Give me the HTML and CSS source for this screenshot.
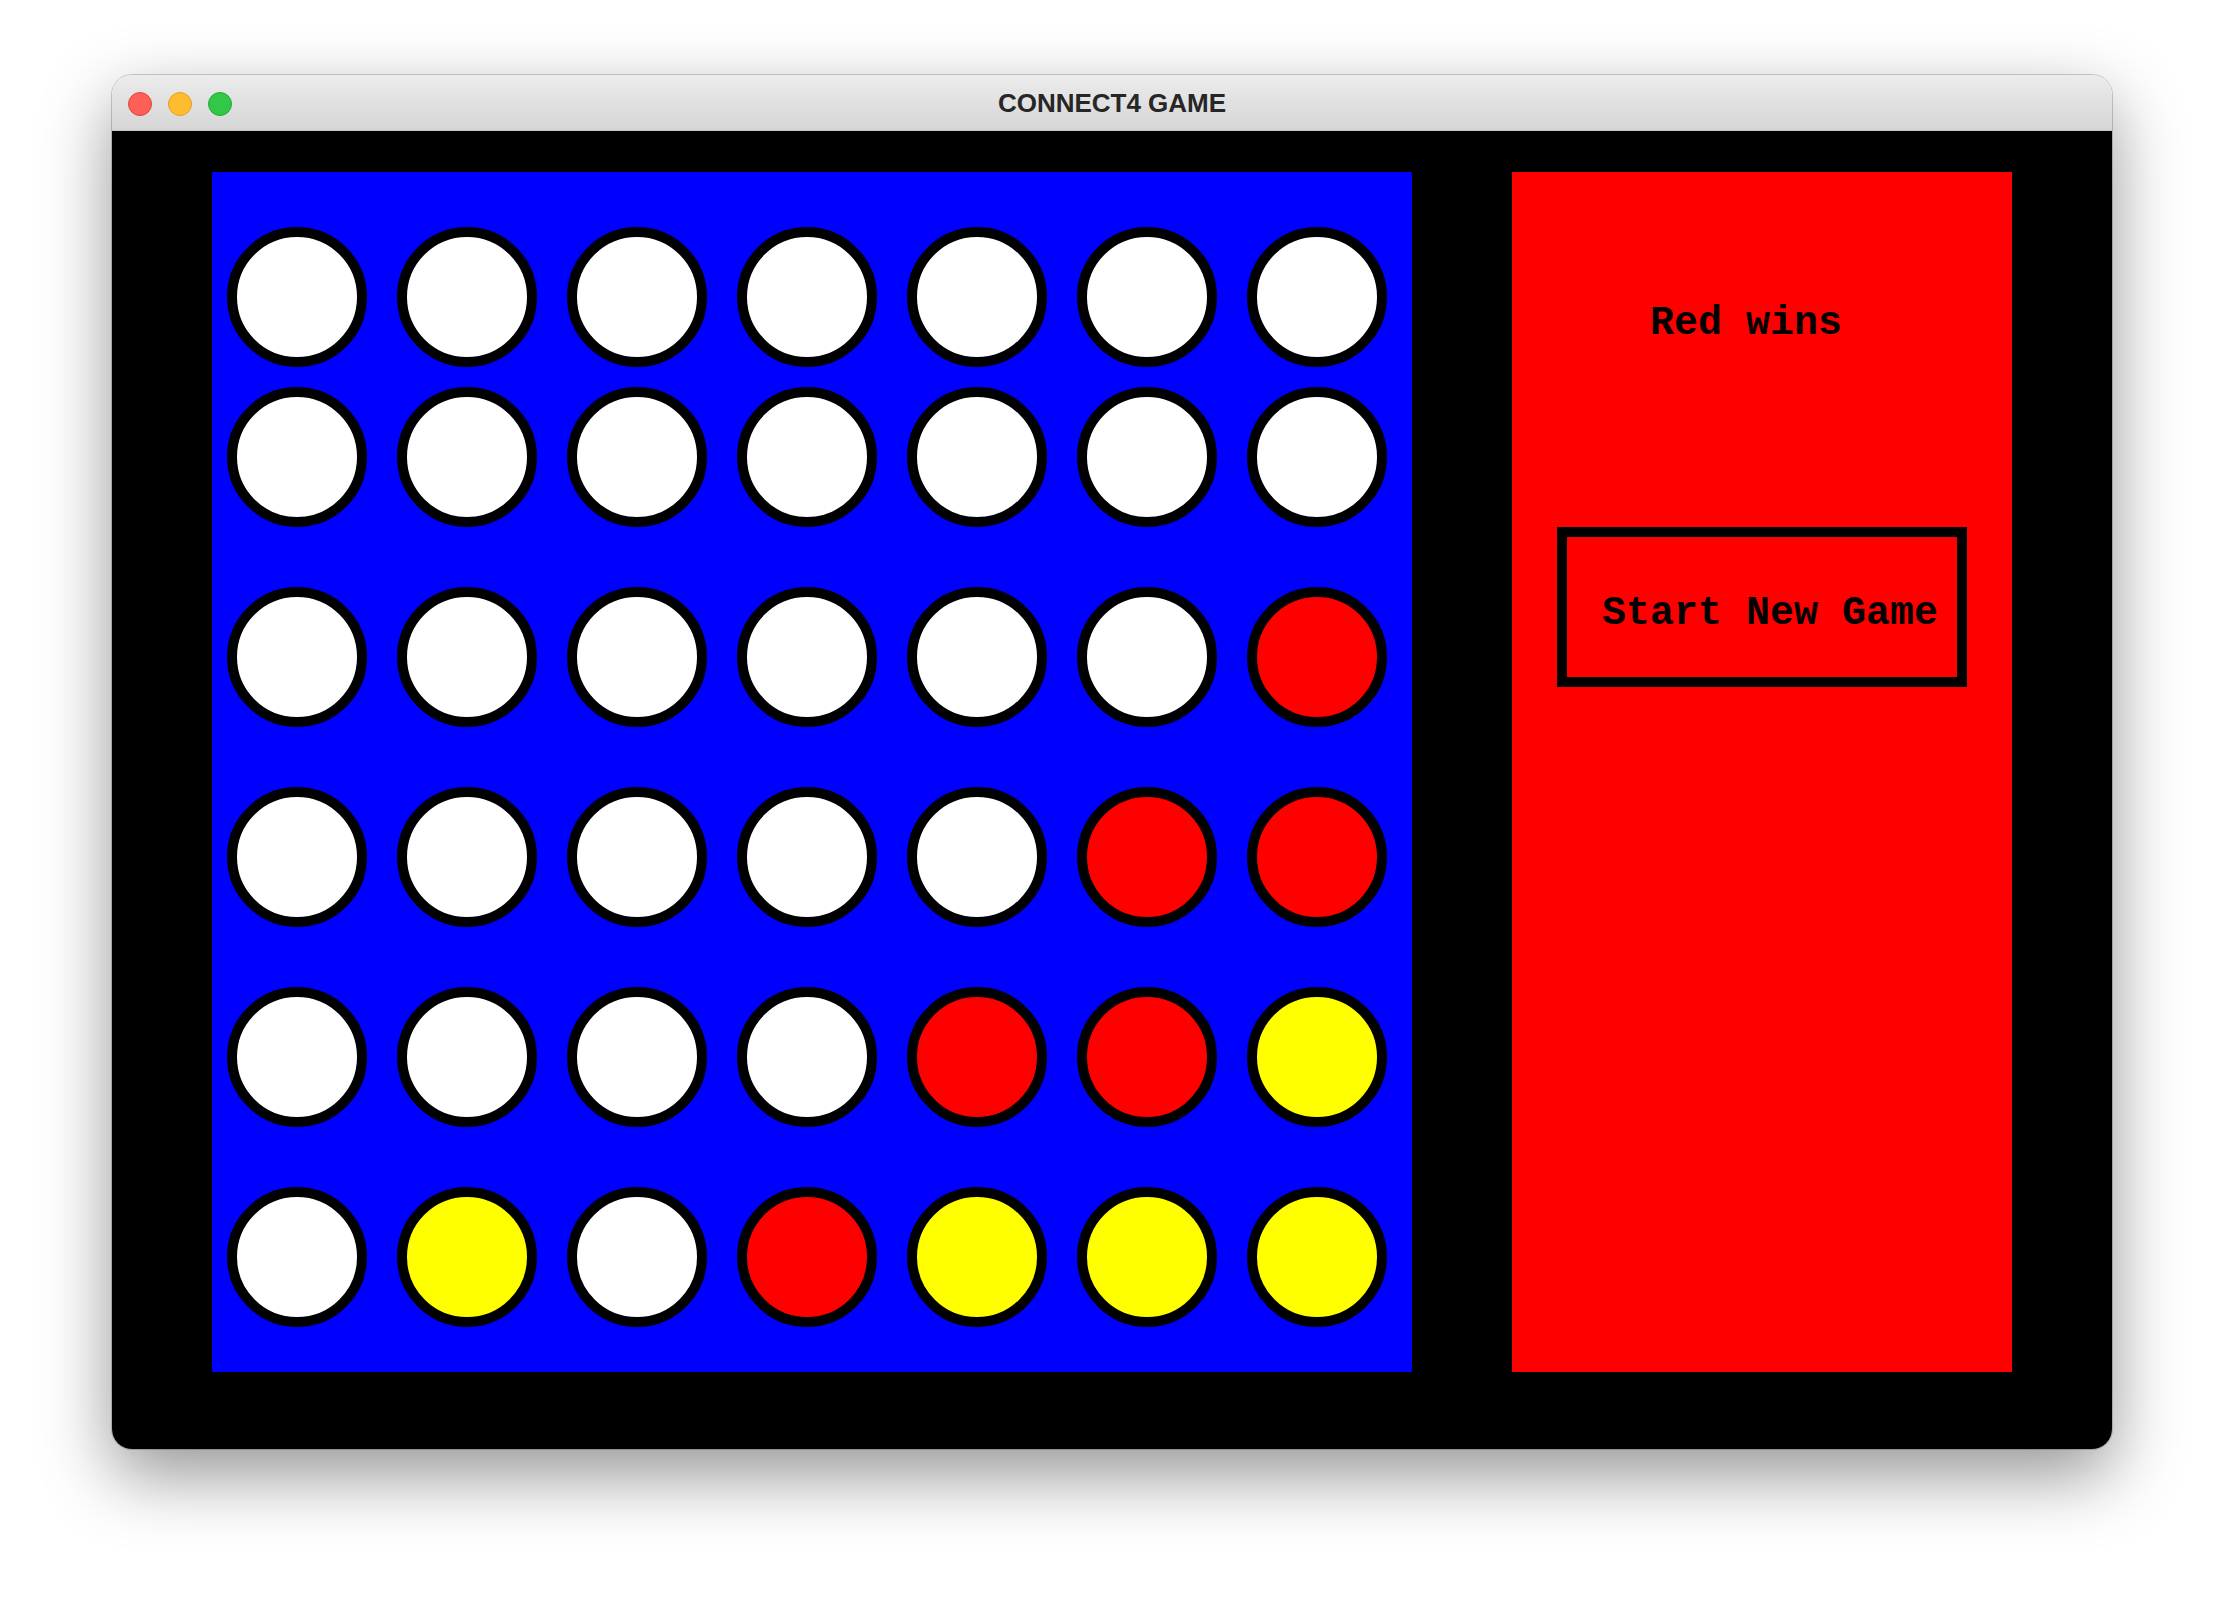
FILE: index.html
```html
<!DOCTYPE html>
<html lang="en">
<head>
<meta charset="utf-8">
<title>CONNECT4 GAME</title>
<link rel="stylesheet" href="styles.css">
</head>
<body>
<div class="window">
  <div class="titlebar">
    <div class="lights">
      <span class="light light-close"></span>
      <span class="light light-min"></span>
      <span class="light light-max"></span>
    </div>
    <div class="title">CONNECT4 GAME</div>
  </div>
  <div class="content">
    <div class="board">
      <div class="row">
        <div class="cell"></div><div class="cell"></div><div class="cell"></div><div class="cell"></div><div class="cell"></div><div class="cell"></div><div class="cell"></div>
      </div>
      <div class="row row-tight">
        <div class="cell"></div><div class="cell"></div><div class="cell"></div><div class="cell"></div><div class="cell"></div><div class="cell"></div><div class="cell"></div>
      </div>
      <div class="row row-wide">
        <div class="cell"></div><div class="cell"></div><div class="cell"></div><div class="cell"></div><div class="cell"></div><div class="cell"></div><div class="cell red"></div>
      </div>
      <div class="row row-wide">
        <div class="cell"></div><div class="cell"></div><div class="cell"></div><div class="cell"></div><div class="cell"></div><div class="cell red"></div><div class="cell red"></div>
      </div>
      <div class="row row-wide">
        <div class="cell"></div><div class="cell"></div><div class="cell"></div><div class="cell"></div><div class="cell red"></div><div class="cell red"></div><div class="cell yellow"></div>
      </div>
      <div class="row row-wide">
        <div class="cell"></div><div class="cell yellow"></div><div class="cell"></div><div class="cell red"></div><div class="cell yellow"></div><div class="cell yellow"></div><div class="cell yellow"></div>
      </div>
    </div>
    <div class="panel">
      <div class="status">Red wins</div>
      <div class="new-game">Start New Game</div>
    </div>
  </div>
</div>
</body>
</html>
```

FILE: styles.css
```css
html, body {
  margin: 0;
  padding: 0;
  background: #ffffff;
}

body {
  width: 2224px;
  height: 1598px;
  overflow: hidden;
  padding-top: 75px;
  box-sizing: border-box;
}

.window {
  margin-left: 112px;
  width: 2000px;
  height: 1374px;
  border-radius: 20px;
  overflow: hidden;
  box-shadow: 0 0 0 1px rgba(0, 0, 0, 0.18), 0 26px 70px rgba(0, 0, 0, 0.42);
  display: flex;
  flex-direction: column;
}

.titlebar {
  height: 55px;
  border-bottom: 1px solid #c4c4c4;
  background: linear-gradient(#ececec, #d6d6d6);
  display: flex;
  align-items: center;
  position: relative;
  flex: none;
}

.lights {
  display: flex;
  gap: 16px;
  padding-left: 16px;
  padding-top: 2px;
}

.light {
  width: 24px;
  height: 24px;
  border-radius: 50%;
  box-sizing: border-box;
  display: block;
}

.light-close { background: #fe5f57; border: 1px solid #e0443e; }
.light-min { background: #febc2e; border: 1px solid #dea123; }
.light-max { background: #33c748; border: 1px solid #1dad2b; }

.title {
  position: absolute;
  left: 0;
  right: 0;
  top: 0;
  bottom: 0;
  display: flex;
  align-items: center;
  justify-content: center;
  font-family: "Liberation Sans", Arial, sans-serif;
  font-weight: bold;
  font-size: 26px;
  color: #262626;
  padding-top: 2px;
}

.content {
  flex: 1;
  background: #000000;
  display: flex;
  padding: 41px 100px 77px 100px;
  gap: 100px;
}

.board {
  width: 1200px;
  height: 1200px;
  background: #0000ff;
  box-sizing: border-box;
  padding: 55px 0 0 15px;
  display: flex;
  flex-direction: column;
}

.row {
  display: flex;
  gap: 30px;
}

.row-tight { margin-top: 20px; }
.row-wide { margin-top: 60px; }

.cell {
  width: 140px;
  height: 140px;
  box-sizing: border-box;
  border: 10px solid #000000;
  border-radius: 50%;
  background: #ffffff;
}

.cell.red { background: #ff0000; }
.cell.yellow { background: #ffff00; }

.panel {
  width: 500px;
  height: 1200px;
  background: #ff0000;
  box-sizing: border-box;
  padding: 132px 0 0 45px;
  font-family: "Liberation Mono", "Courier New", monospace;
  font-weight: bold;
  font-size: 40px;
  line-height: 40px;
  color: #000000;
}

.status {
  padding-left: 93px;
  height: 40px;
}

.new-game {
  margin-top: 183px;
  width: 410px;
  height: 160px;
  box-sizing: border-box;
  border: 10px solid #000000;
  padding: 57px 0 0 35px;
  white-space: nowrap;
}
```
